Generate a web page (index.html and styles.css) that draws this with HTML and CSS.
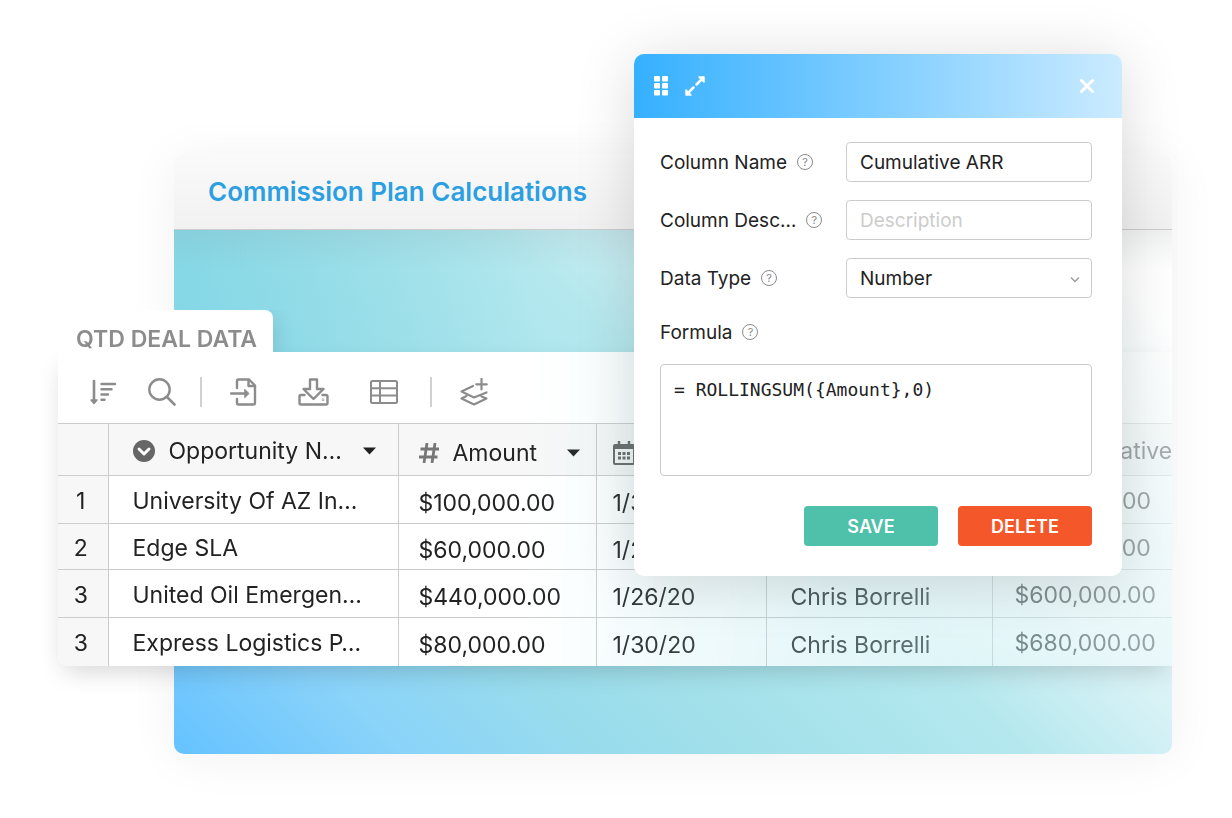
FILE: index.html
```html
<!DOCTYPE html>
<html lang="en">
<head>
<meta charset="utf-8">
<title>Commission Plan Calculations</title>
<link rel="stylesheet" href="styles.css">
</head>
<body>
<main class="scene">
  <section class="plan">
    <header class="plan-header"><h1 class="plan-title">Commission Plan Calculations</h1></header>
    <div class="plan-canvas"></div>
  </section>

  <section class="sheet">
    <div class="sheet-fade">
      <h2 class="sheet-tab">QTD DEAL DATA</h2>
      <div class="sheet-body">
        <div class="toolbar">
          <div class="tool-group tool-group-view">
            <button class="tool" aria-label="Sort"><svg width="28" height="28" viewBox="0 0 28 28" fill="none" stroke="currentColor" stroke-width="2.4" stroke-linecap="round" stroke-linejoin="round"><path d="M5 3v20" stroke-width="2.600"/><path d="M2 22h6l-3 3.500z" fill="currentColor" stroke-width="1.5"/><path d="M12.500 6h13.500M12.500 11.300h10M12.500 16.500h6.500M12.500 21.700h3" /></svg></button>
            <button class="tool" aria-label="Search"><svg width="28" height="28" viewBox="0 0 28 28" fill="none" stroke="currentColor" stroke-width="2.4" stroke-linecap="round"><circle cx="11.500" cy="11.500" r="10.200"/><path d="M19 19l7.500 7.500" stroke-width="2.600"/></svg></button>
          </div>
          <span class="tool-sep"></span>
          <div class="tool-group tool-group-data">
            <button class="tool" aria-label="Import"><svg width="28" height="28" viewBox="0 0 28 28" fill="none" stroke="currentColor" stroke-width="2.400" stroke-linecap="round" stroke-linejoin="round"><path d="M7 10V3q0-1.500 1.500-1.500H19L25 7.500V25q0 1.500-1.500 1.500h-15Q7 26.500 7 25v-4"/><path d="M18.500 2v6H25" /><path d="M1 15.500h15"/><path d="M15 11.500l4 4-4 4z" fill="currentColor" stroke-width="1"/></svg></button>
            <button class="tool" aria-label="Export"><svg width="32" height="28" viewBox="0 0 32 28" fill="none" stroke="currentColor" stroke-width="2.400" stroke-linecap="round" stroke-linejoin="round"><path d="M12 1.500h7V11h6.500L15.500 21 5.500 11H12z"/><path d="M6.500 17H3q-1.500 0-1.500 1.500V25q0 1.500 1.500 1.500h25q1.500 0 1.500-1.500v-6.500Q29.500 17 28 17h-3.500"/><circle cx="25" cy="21.700" r=".3" stroke-width="2"/></svg></button>
            <button class="tool" aria-label="Table"><svg width="28" height="28" viewBox="0 0 28 28" fill="none" stroke="currentColor" stroke-width="2"><rect x="1" y="3" width="26" height="22" rx="1.500"/><path d="M10 3v22M1 10.300h26M1 17.500h26"/></svg></button>
          </div>
          <span class="tool-sep"></span>
          <div class="tool-group">
            <button class="tool" aria-label="Add layer"><svg width="28" height="28" viewBox="0 0 28 28" fill="none" stroke="currentColor" stroke-width="2.200" stroke-linecap="round" stroke-linejoin="round"><path d="M13 8L1.500 13.500l12.500 6 12.500-5"/><path d="M6.500 18l-5 2.500 12.500 6 12.500-6-5-2"/><path d="M21.500 1v10.500M16.300 6.300h10.500"/></svg></button>
          </div>
        </div>
        <table class="deals">
          <colgroup><col class="c-index"><col class="c-name"><col class="c-amount"><col class="c-date"><col class="c-owner"><col></colgroup>
          <thead>
            <tr>
              <th></th>
              <th><span class="head head-name"><svg width="22" height="22" viewBox="0 0 22 22"><circle cx="11" cy="11" r="11" fill="#666"/><path d="M6 9l5 5 5-5" fill="none" stroke="#fff" stroke-width="3" stroke-linecap="round" stroke-linejoin="round"/></svg><span class="head-text">Opportunity N…</span><svg width="13" height="8" viewBox="0 0 13 8"><path d="M0 .5h13L6.500 7.500z" fill="#222"/></svg></span></th>
              <th class="low"><span class="head"><svg width="20" height="20" viewBox="0 0 20 20" fill="none" stroke="#777" stroke-width="2.800"><path d="M8 0L5 20M16 0l-3 20M1.500 6H20M0 14h18.500"/></svg><span class="head-text">Amount</span><svg width="13" height="8" viewBox="0 0 13 8"><path d="M0 .5h13L6.500 7.500z" fill="#222"/></svg></span></th>
              <th class="low"><span class="head"><svg width="22" height="24" viewBox="0 0 22 24" fill="none" stroke="#666"><rect x="1" y="4" width="20" height="19" rx="1" stroke-width="2"/><path d="M1 6h20" stroke-width="4"/><path d="M6 0v5M16 0v5" stroke-width="2.500"/><path d="M5 12.500h12M5 17h12" stroke-width="3" stroke-dasharray="3 1.500"/></svg><span class="head-text">Date</span></span></th>
              <th class="low"><span class="head"><span class="head-text">Owner</span></span></th>
              <th><span class="head head-total">Cumulative</span></th>
            </tr>
          </thead>
          <tbody>
            <tr class="tall"><td>1</td><td>University Of AZ In…</td><td class="low">$100,000.00</td><td class="low">1/31/20</td><td class="low">Chris Borrelli</td><td>$100,000.00</td></tr>
            <tr><td>2</td><td>Edge SLA</td><td class="low">$60,000.00</td><td class="low">1/28/20</td><td class="low">Chris Borrelli</td><td>$160,000.00</td></tr>
            <tr class="tall"><td>3</td><td>United Oil Emergen…</td><td class="low">$440,000.00</td><td class="low">1/26/20</td><td class="low">Chris Borrelli</td><td>$600,000.00</td></tr>
            <tr class="tall"><td>3</td><td>Express Logistics P…</td><td class="low">$80,000.00</td><td class="low">1/30/20</td><td class="low">Chris Borrelli</td><td>$680,000.00</td></tr>
          </tbody>
        </table>
      </div>
    </div>
  </section>

  <form class="dialog" onsubmit="return false">
    <header class="dialog-header">
      <svg width="14" height="20" viewBox="0 0 14 20" fill="#fff"><rect width="6" height="5.500" rx="1"/><rect x="8" width="6" height="5.500" rx="1"/><rect y="7" width="6" height="5.500" rx="1"/><rect x="8" y="7" width="6" height="5.500" rx="1"/><rect y="14" width="6" height="5.500" rx="1"/><rect x="8" y="14" width="6" height="5.500" rx="1"/></svg>
      <button type="button" class="icon-button" aria-label="Expand"><svg width="20" height="20" viewBox="0 0 20 20" fill="#fff" stroke="#fff" stroke-linecap="round" stroke-linejoin="round"><path d="M11.500 8.500L16 4M8.500 11.500L4 16" stroke-width="2.500"/><path d="M14 1h5v5zM1 14v5h5z" stroke-width="1.500"/></svg></button>
      <button type="button" class="icon-button close" aria-label="Close"><svg width="14" height="14" viewBox="0 0 14 14" fill="none" stroke="#fff" stroke-width="3" stroke-linecap="round"><path d="M1.500 1.500l11 11M12.500 1.500l-11 11"/></svg></button>
    </header>
    <div class="dialog-body">
      <div class="field">
        <label for="name">Column Name</label><span class="help">?</span>
        <input class="control" id="name" type="text" value="Cumulative ARR">
      </div>
      <div class="field">
        <label for="desc">Column Desc…</label><span class="help">?</span>
        <input class="control" id="desc" type="text" placeholder="Description">
      </div>
      <div class="field">
        <label for="type">Data Type</label><span class="help">?</span>
        <div class="control-wrap">
          <select class="control" id="type"><option>Number</option></select>
          <svg class="chevron" width="10" height="6" viewBox="0 0 10 6" fill="none" stroke="#999" stroke-width="1.300"><path d="M1 .5l4 4 4-4"/></svg>
        </div>
      </div>
      <div class="field field-formula">
        <label for="formula">Formula</label><span class="help">?</span>
      </div>
      <textarea class="formula" id="formula" spellcheck="false">= ROLLINGSUM({Amount},0)</textarea>
      <div class="actions">
        <button type="submit" class="action save">SAVE</button>
        <button type="button" class="action delete">DELETE</button>
      </div>
    </div>
  </form>
</main>
</body>
</html>
```
FILE: styles.css
```css
* { box-sizing: border-box; }

body {
  margin: 0;
  background: #fff;
  color: #222;
  font-family: Inter, "Liberation Sans", sans-serif;
}

button, input, select, textarea { font: inherit; color: inherit; }

.scene {
  position: relative;
  min-height: 100vh;
  overflow: hidden;
}

/* Backdrop window */
.plan {
  position: absolute;
  top: 154px;
  bottom: 64px;
  left: 174px;
  right: 60px;
  display: flex;
  flex-direction: column;
  overflow: hidden;
  border-radius: 10px;
  box-shadow: 0 4px 50px rgba(0, 0, 0, 0.06);
}

.plan-header {
  padding: 22px 34px;
  border-bottom: 1px solid #ccc;
  background: linear-gradient(#fafafa, #f1f1f1);
}

.plan-title {
  margin: 0;
  color: #2b9fe2;
  font-size: 26px;
  font-weight: 600;
  line-height: 31px;
}

.plan-canvas {
  flex: 1;
  background:
    linear-gradient(rgba(110, 120, 125, 0.1), transparent 40px),
    radial-gradient(circle at 0 10%, rgba(110, 210, 225, 0.5), transparent 360px),
    linear-gradient(45deg, #64c2ff 0%, #8ad3fa 15%, #98dcec 28%, #a2e0ea 38%, #b4e8ee 56%, #d8f2f6 68%, #fff 94%);
}

/* Deal sheet */
.sheet {
  position: absolute;
  top: 310px;
  left: 58px;
  right: 60px;
}

.sheet::before {
  content: "";
  position: absolute;
  top: 42px;
  bottom: 0;
  left: 0;
  right: 0;
  border-radius: 0 0 0 10px;
  box-shadow: 0 10px 26px -6px rgba(0, 0, 0, 0.18);
  clip-path: inset(-20px 0 -60px -60px);
}

.sheet-fade {
  position: relative;
  overflow: hidden;
  border-radius: 10px 0 0 10px;
  -webkit-mask-image: linear-gradient(to right, #000 42%, rgba(0, 0, 0, 0.7) 68%, rgba(0, 0, 0, 0.35));
  mask-image: linear-gradient(to right, #000 42%, rgba(0, 0, 0, 0.7) 68%, rgba(0, 0, 0, 0.35));
}

.sheet-tab {
  width: max-content;
  margin: 0;
  padding: 17px 16px 0 18px;
  border-radius: 10px 8px 0 0;
  background: #fff;
  box-shadow: 0 8px 24px rgba(0, 0, 0, 0.16);
  color: #8c8c8c;
  font-size: 23px;
  font-weight: 600;
  line-height: 25px;
}

.sheet-body { background: #fff; }

.toolbar {
  display: flex;
  align-items: center;
  padding: 25px 31px 16px;
}

.tool-group { display: flex; gap: 31px; }
.tool-group-data { gap: 40px; padding-right: 8px; }

.tool {
  display: flex;
  padding: 0;
  border: 0;
  background: none;
  color: #8c8c8c;
}

.tool-sep {
  width: 2px;
  height: 30px;
  margin: 0 28px 0 24px;
  background: #d0d0d0;
}

.deals {
  width: 100%;
  table-layout: fixed;
  border-collapse: collapse;
  font-size: 23px;
  line-height: 28px;
  white-space: nowrap;
}

.c-index { width: 50px; }
.c-name { width: 290px; }
.c-amount { width: 198px; }
.c-date { width: 170px; }
.c-owner { width: 226px; }

.deals th, .deals td {
  height: 46px;
  padding: 2px 0 0 20px;
  overflow: hidden;
  border: 1px solid #ccc;
  font-weight: 400;
  text-align: left;
}

.deals .tall td { height: 48px; }
.deals th { height: 52px; background: #f7f7f7; }
.deals th:first-child, .deals td:first-child { padding: 2px 4px 0 0; border-left: 0; background: #f7f7f7; text-align: center; }
.deals th:nth-child(2), .deals td:nth-child(2) { padding-left: 24px; }
.deals th:nth-child(4), .deals td:nth-child(4) { padding-left: 16px; }
.deals th:nth-child(5), .deals td:nth-child(5) { padding-left: 24px; }
.deals th:last-child, .deals td:last-child { padding-left: 22px; border-right: 0; }
.deals tr:last-child td { border-bottom: 0; }
.deals .low { padding-top: 6px; }

.head {
  display: flex;
  align-items: center;
  gap: 14px;
  padding-right: 16px;
}

.head-name { padding-right: 22px; }
.head-text { flex: 1; }
.head-total { padding-left: 36px; }

/* Column editor */
.dialog {
  position: absolute;
  top: 54px;
  right: 110px;
  width: 488px;
  overflow: hidden;
  border-radius: 10px;
  background: #fff;
  box-shadow: 0 6px 60px rgba(0, 0, 0, 0.15);
}

.dialog-header {
  display: flex;
  align-items: center;
  gap: 17px;
  height: 64px;
  padding: 0 28px 0 20px;
  background: linear-gradient(to right, #35b0ff, #cbebff);
}

.icon-button {
  display: flex;
  padding: 0;
  border: 0;
  background: none;
}

.close { margin-left: auto; }

.dialog-body { padding: 24px 30px 30px 26px; }

.field {
  display: flex;
  align-items: center;
  gap: 10px;
  margin-bottom: 18px;
  font-size: 19px;
}

.field-formula { height: 32px; margin-bottom: 16px; }

.help {
  width: 16px;
  height: 16px;
  border: 1px solid #8c8c8c;
  border-radius: 50%;
  color: #888;
  font-size: 11px;
  line-height: 14px;
  text-align: center;
}

.control {
  width: 246px;
  height: 40px;
  margin: 0 0 0 auto;
  padding: 0 13px;
  border: 1px solid #ccc;
  border-radius: 4px;
  background: #fff;
  font-size: 19px;
  appearance: none;
}

.control::placeholder { color: #ccc; opacity: 1; }

.control-wrap {
  position: relative;
  margin-left: auto;
}

.control-wrap .control { display: block; }

.chevron {
  position: absolute;
  top: 19px;
  right: 12px;
}

.formula {
  display: block;
  width: 100%;
  height: 112px;
  padding: 13px;
  border: 1px solid #ccc;
  border-radius: 4px;
  font-family: "DejaVu Sans Mono", monospace;
  font-size: 18px;
  line-height: 24px;
  resize: none;
}

.actions {
  display: flex;
  justify-content: flex-end;
  gap: 20px;
  margin-top: 30px;
}

.action {
  width: 134px;
  height: 40px;
  padding: 0;
  border: 0;
  border-radius: 4px;
  color: #fff;
  font-size: 18px;
  font-weight: 600;
}

.save { background: #4fc0aa; }
.delete { background: #f4582a; }
```
